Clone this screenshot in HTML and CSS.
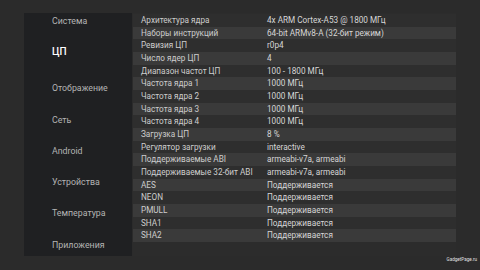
FILE: index.html
```html
<!DOCTYPE html>
<html lang="ru">
<head>
    <meta charset="UTF-8">
    <meta name="viewport" content="width=device-width, initial-scale=1.0">
    <title>CPU Info</title>
    <link rel="stylesheet" href="styles.css">
</head>
<body>
    <div class="screen">
        <nav class="sidebar">
            <div class="nav-item">Система</div>
            <div class="nav-item active">ЦП</div>
            <div class="nav-item">Отображение</div>
            <div class="nav-item">Сеть</div>
            <div class="nav-item">Android</div>
            <div class="nav-item">Устройства</div>
            <div class="nav-item">Температура</div>
            <div class="nav-item">Приложения</div>
        </nav>

        <div class="info-panel">
            <div class="info-row"><span class="label">Архитектура ядра</span><span class="value">4x ARM Cortex-A53 @ 1800 МГц</span></div>
            <div class="info-row"><span class="label">Наборы инструкций</span><span class="value">64-bit ARMv8-A (32-бит режим)</span></div>
            <div class="info-row"><span class="label">Ревизия ЦП</span><span class="value">r0p4</span></div>
            <div class="info-row"><span class="label">Число ядер ЦП</span><span class="value">4</span></div>
            <div class="info-row"><span class="label">Диапазон частот ЦП</span><span class="value">100 - 1800 МГц</span></div>
            <div class="info-row"><span class="label">Частота ядра 1</span><span class="value">1000 МГц</span></div>
            <div class="info-row"><span class="label">Частота ядра 2</span><span class="value">1000 МГц</span></div>
            <div class="info-row"><span class="label">Частота ядра 3</span><span class="value">1000 МГц</span></div>
            <div class="info-row"><span class="label">Частота ядра 4</span><span class="value">1000 МГц</span></div>
            <div class="info-row"><span class="label">Загрузка ЦП</span><span class="value">8 %</span></div>
            <div class="info-row"><span class="label">Регулятор загрузки</span><span class="value">interactive</span></div>
            <div class="info-row"><span class="label">Поддерживаемые ABI</span><span class="value">armeabi-v7a, armeabi</span></div>
            <div class="info-row"><span class="label">Поддерживаемые 32-бит ABI</span><span class="value">armeabi-v7a, armeabi</span></div>
            <div class="info-row"><span class="label">AES</span><span class="value">Поддерживается</span></div>
            <div class="info-row"><span class="label">NEON</span><span class="value">Поддерживается</span></div>
            <div class="info-row"><span class="label">PMULL</span><span class="value">Поддерживается</span></div>
            <div class="info-row"><span class="label">SHA1</span><span class="value">Поддерживается</span></div>
            <div class="info-row"><span class="label">SHA2</span><span class="value">Поддерживается</span></div>
        </div>
    </div>

    <div class="watermark">GadgetPage.ru</div>
</body>
</html>
```

FILE: styles.css
```css
body {
    margin: 0;
    width: 480px;
    height: 270px;
    overflow: hidden;
    background: #2b2b2b;
    font-family: Roboto, 'Noto Sans', sans-serif;
    position: relative;
}

.screen {
    display: flex;
    padding: 13px 0 0 24px;
}

.sidebar {
    width: 108px;
    height: 243px;
    background: #1f2022;
    display: flex;
    flex-direction: column;
    box-sizing: border-box;
    padding-left: 28px;
}

.nav-item {
    height: 16px;
    line-height: 16px;
    font-size: 8.8px;
    color: #b4b4b4;
    margin-top: 15.3px;
}

.nav-item:first-child {
    margin-top: 0;
}

.nav-item.active {
    color: #ffffff;
    font-size: 10px;
    font-weight: 500;
    margin-top: 14.7px;
}

.nav-item.active + .nav-item {
    margin-top: 20.6px;
}

.info-panel {
    width: 323px;
    margin-left: 1px;
    padding-top: 1px;
    height: 242px;
    background: #2c2c2c;
}

.info-row {
    display: flex;
    height: 12.67px;
    line-height: 12.67px;
    font-size: 8.2px;
    padding-left: 8px;
    background: #2e2e2e;
}

.info-row:nth-child(even) {
    background: #3a3a3a;
}

.label {
    width: 126px;
    color: #cdcdcd;
    white-space: nowrap;
}

.value {
    color: #d6d6d6;
    white-space: nowrap;
}

.watermark {
    position: absolute;
    right: 3px;
    bottom: 8px;
    font-size: 4.6px;
    color: #e0e0e0;
}
```
